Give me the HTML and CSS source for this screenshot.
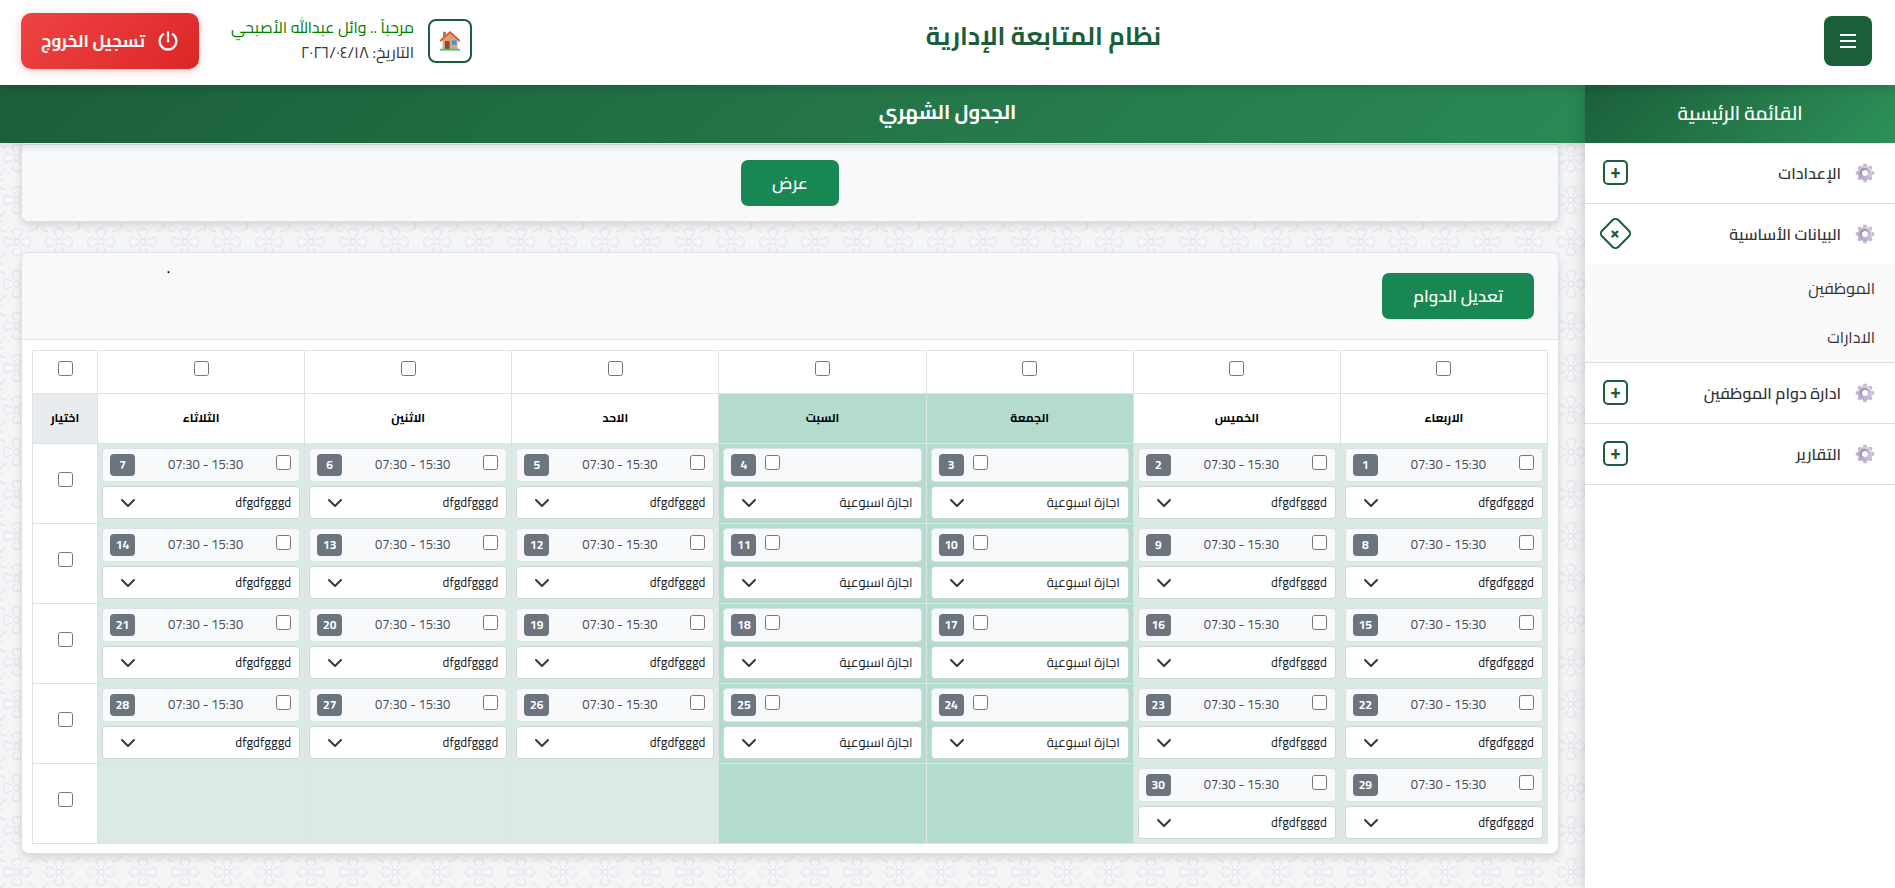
FILE: index.html
```
<!DOCTYPE html>
<html lang="ar" dir="rtl">
<head>
    <meta charset="UTF-8">
    <meta name="viewport" content="width=device-width, initial-scale=1.0">
    <title>نظام المتابعة الإدارية</title>
    <link rel="stylesheet" href="styles.css">
</head>
<body>
    <!-- shared icons -->
    <svg class="icon-defs" width="0" height="0" aria-hidden="true">
        <defs>
            <linearGradient id="gearFill" x1="0" y1="1" x2="1" y2="0">
                <stop offset="0" stop-color="#b3a1cc"/>
                <stop offset="1" stop-color="#dcd4e6"/>
            </linearGradient>
            <linearGradient id="gearRing" x1="0" y1="0" x2="1" y2="1">
                <stop offset="0" stop-color="#8f8299"/>
                <stop offset="1" stop-color="#d3c9e2"/>
            </linearGradient>
        </defs>
        <symbol id="gear" viewBox="0 0 20 20">
            <g stroke="url(#gearFill)" fill="#c5b8d9">
                <circle cx="10" cy="2.6" r="2.1" stroke="none"/>
                <circle cx="15.2" cy="4.8" r="2.1" stroke="none"/>
                <circle cx="17.4" cy="10" r="2.1" stroke="none"/>
                <circle cx="15.2" cy="15.2" r="2.1" stroke="none"/>
                <circle cx="10" cy="17.4" r="2.1" stroke="none"/>
                <circle cx="4.8" cy="15.2" r="2.1" stroke="none"/>
                <circle cx="2.6" cy="10" r="2.1" stroke="none"/>
                <circle cx="4.8" cy="4.8" r="2.1" stroke="none"/>
                <circle cx="10" cy="10" r="5.2" fill="none" stroke-width="4"/>
            </g>
            <circle cx="10" cy="10" r="4" fill="none" stroke="url(#gearRing)" stroke-width="2"/>
        </symbol>
    </svg>

    <header class="top-header">
        <div class="header-start">
            <button type="button" class="menu-toggle" aria-label="القائمة">
                <svg width="16" height="16" viewBox="0 0 16 16"><path d="M0 2h16M0 8h16M0 14h16" stroke="currentColor" stroke-width="2"/></svg>
            </button>
        </div>
        <h1>نظام المتابعة الإدارية</h1>
        <div class="header-end">
            <a href="#" class="home-link" aria-label="الرئيسية">
                <svg width="20" height="20" viewBox="0 0 20 20">
                    <path d="M3 .8h3v6H3z" fill="#a9825f"/>
                    <path d="M2.6 9 10 2l7.4 7v9.4H2.6z" fill="#dca46f"/>
                    <path d="M.8 9.6 10 1.2l9.2 8.4" fill="none" stroke="#e8563a" stroke-width="2" stroke-linejoin="round" stroke-linecap="round"/>
                    <path d="M5 10h4.6v8H5z" fill="#7d4b43"/>
                    <path d="M12 9.4h4.6v4.4H12z" fill="#2f9df4"/>
                    <path d="M0 17.8h20v1.8H0z" fill="#35c77c"/>
                </svg>
            </a>
            <div class="user-info">
                <div class="user-name">مرحباً .. وائل عبدالله الأصبحي</div>
                <div>التاريخ: ٢٠٢٦/٠٤/١٨</div>
            </div>
            <button type="button" class="logout-btn">
                <svg width="22" height="22" viewBox="0 0 22 22" fill="none" stroke="currentColor" stroke-width="2.2" stroke-linecap="round"><path d="M11 2.4v9M6.2 4.2a8.4 8.4 0 1 0 9.6 0"/></svg>
                تسجيل الخروج
            </button>
        </div>
    </header>

    <div class="layout">
        <div class="page-title"><h2>الجدول الشهري</h2></div>

        <nav class="sidebar">
            <h3>القائمة الرئيسية</h3>
            <ul class="menu">
                <li>
                    <a href="#" class="menu-item"><svg class="gear"><use href="#gear"/></svg><span>الإعدادات</span><b class="expand">+</b></a>
                </li>
                <li>
                    <a href="#" class="menu-item"><svg class="gear"><use href="#gear"/></svg><span>البيانات الأساسية</span><b class="expand open">+</b></a>
                    <div class="submenu">
                        <a href="#">الموظفين</a>
                        <a href="#">الادارات</a>
                    </div>
                </li>
                <li>
                    <a href="#" class="menu-item"><svg class="gear"><use href="#gear"/></svg><span>ادارة دوام الموظفين</span><b class="expand">+</b></a>
                </li>
                <li>
                    <a href="#" class="menu-item"><svg class="gear"><use href="#gear"/></svg><span>التقارير</span><b class="expand">+</b></a>
                </li>
            </ul>
        </nav>

        <main class="content">
            <section class="card filter-card">
                <div class="filter-footer">
                    <button type="button" class="btn">عرض</button>
                </div>
            </section>

            <section class="card">
                <div class="card-header">
                    <button type="button" class="btn">تعديل الدوام</button>
                    <span class="note">.</span>
                </div>
                <div class="card-body">
                    <table class="schedule">
                        <thead>
                            <tr class="check-row" id="checkRow"></tr>
                            <tr class="day-names" id="dayNames"></tr>
                        </thead>
                        <tbody id="scheduleBody"></tbody>
                    </table>
                </div>
            </section>
        </main>
    </div>

    <script>
        const days = ['الاربعاء', 'الخميس', 'الجمعة', 'السبت', 'الاحد', 'الاثنين', 'الثلاثاء'];
        const weekend = [2, 3];
        const daysInMonth = 30;

        const cls = i => weekend.includes(i) ? 'weekend' : 'workday';

        document.getElementById('checkRow').innerHTML =
            days.map(d => `<td><input type="checkbox" aria-label="${d}"></td>`).join('') +
            '<td class="pick"><input type="checkbox" aria-label="الكل"></td>';

        document.getElementById('dayNames').innerHTML =
            days.map((d, i) => `<th class="${cls(i)}">${d}</th>`).join('') +
            '<th class="pick">اختيار</th>';

        function dayCell(day, i) {
            if (day > daysInMonth) {
                return `<td class="${cls(i)}"></td>`;
            }
            const off = weekend.includes(i);
            return `
                <td class="${cls(i)}">
                    <div class="day-info">
                        <input type="checkbox" aria-label="${day}">
                        ${off ? '' : '<span class="hours" dir="ltr">07:30 - 15:30</span>'}
                        <span class="badge">${day}</span>
                    </div>
                    <select aria-label="${days[i]} ${day}">
                        <option>${off ? 'اجازة اسبوعية' : 'dfgdfgggd'}</option>
                    </select>
                </td>`;
        }

        let rows = '';
        for (let start = 1; start <= daysInMonth; start += 7) {
            rows += '<tr>' + days.map((d, i) => dayCell(start + i, i)).join('') +
                `<td class="pick"><input type="checkbox" aria-label="${start}"></td></tr>`;
        }
        document.getElementById('scheduleBody').innerHTML = rows;
    </script>
</body>
</html>
```
FILE: styles.css
```
* {
    margin: 0;
    padding: 0;
    box-sizing: border-box;
}

body {
    font-family: Cairo, "Open Sans", "DejaVu Sans", sans-serif;
    font-size: 16px;
    color: #333;
    background: #f4f5f7;
    min-height: 100vh;
    display: flex;
    flex-direction: column;
}

a {
    color: inherit;
    text-decoration: none;
}

button {
    font-family: inherit;
    border: none;
    cursor: pointer;
}

.icon-defs {
    position: absolute;
}

/* header */
.top-header {
    display: grid;
    grid-template-columns: 11fr auto 14fr;
    align-items: center;
    height: 85px;
    padding: 0 23px 4px 21px;
    background: #fff;
    box-shadow: 0 2px 10px rgba(0, 0, 0, 0.15);
    position: relative;
    z-index: 3;
}

.top-header h1 {
    font-size: 25px;
    font-weight: 700;
    line-height: 36px;
    padding-bottom: 10px;
    color: #1b5e3a;
}

.menu-toggle {
    display: flex;
    align-items: center;
    justify-content: center;
    width: 48px;
    height: 50px;
    border-radius: 8px;
    background: #1b5e3a;
    color: #fff;
}

.header-end {
    display: flex;
    align-items: center;
    justify-content: flex-end;
}

.home-link {
    display: flex;
    align-items: center;
    justify-content: center;
    width: 44px;
    height: 44px;
    border: 2px solid #1b5e3a;
    border-radius: 8px;
}

.user-info {
    margin: 0 14px 0 32px;
    padding-bottom: 2px;
    font-size: 16px;
    line-height: 25px;
}

.user-name {
    color: #008000;
}

.logout-btn {
    display: flex;
    align-items: center;
    gap: 12px;
    height: 56px;
    padding: 0 20px;
    border-radius: 10px;
    background: linear-gradient(135deg, #ef4444, #dc2626);
    box-shadow: 0 2px 8px rgba(239, 68, 68, 0.3);
    color: #fff;
    font-size: 17px;
    font-weight: 700;
}

/* the page title runs behind the sidebar */
.layout {
    flex: 1;
    display: grid;
    grid-template-columns: 310px 1fr;
    grid-template-rows: 58px 1fr;
}

.page-title {
    grid-area: 1 / 1 / 2 / 3;
    background: linear-gradient(135deg, #1b5e3a, #2d9159);
    box-shadow: 0 2px 10px rgba(0, 0, 0, 0.15);
    color: #fff;
    text-align: center;
    z-index: 1;
}

.page-title h2 {
    font-size: 20px;
    font-weight: 700;
    line-height: 54px;
}

/* sidebar */
.sidebar {
    grid-area: 1 / 1 / 3 / 2;
    background: #fff;
    box-shadow: 0 0 15px rgba(0, 0, 0, 0.2);
    z-index: 2;
}

.sidebar h3 {
    height: 58px;
    background: linear-gradient(135deg, #1b5e3a, #2d9159);
    color: #fff;
    font-size: 19px;
    font-weight: 600;
    line-height: 56px;
    text-align: center;
}

.menu {
    list-style: none;
}

.menu li {
    border-bottom: 1px solid #ddd;
}

.menu-item {
    display: flex;
    align-items: center;
    height: 60px;
    padding: 0 20px 0 18px;
}

.menu-item span {
    flex: 1;
    margin-right: 14px;
    font-weight: 600;
}

.gear {
    width: 20px;
    height: 20px;
}

.expand {
    width: 25px;
    height: 25px;
    margin-bottom: 1px;
    border: 2px solid #1b5e3a;
    border-radius: 5px;
    color: #1b5e3a;
    font-size: 19px;
    line-height: 19px;
    text-align: center;
}

.expand.open {
    transform: rotate(45deg);
}

.submenu {
    background: #fafafa;
}

.submenu a {
    display: block;
    padding: 0 20px;
    line-height: 49px;
}

/* content */
.content {
    padding: 0 26px 34px 21px;
    background: #f4f5f7 url("data:image/svg+xml,%3Csvg xmlns='http://www.w3.org/2000/svg' width='42' height='42' fill='none' stroke='%23e6e7ea' stroke-width='1.3'%3E%3Ccircle cx='17' cy='15' r='3'/%3E%3Cpath d='M15 11L12 4Q17 -1 22 4L19 11'/%3E%3Cpath d='M15 11L12 4Q17 -1 22 4L19 11' transform='rotate(90 17 15)'/%3E%3Cpath d='M15 11L12 4Q17 -1 22 4L19 11' transform='rotate(180 17 15)'/%3E%3Cpath d='M15 11L12 4Q17 -1 22 4L19 11' transform='rotate(270 17 15)'/%3E%3Cpath d='M28 26Q38 32 38 42M38 0Q37 2 28 5M6 26Q-1 30 -4 42M0 2Q2 4 6 5M31 36Q38 30 45 36M0 36L3 38'/%3E%3C/svg%3E");
}

.card {
    background: #fff;
    border: 1px solid #dee2e6;
    border-radius: 8px;
    box-shadow: 0 4px 8px rgba(0, 0, 0, 0.12);
    overflow: hidden;
}

.filter-card {
    margin-bottom: 30px;
    border-top: none;
    border-radius: 0 0 8px 8px;
}

.filter-footer {
    margin-top: 1px;
    padding: 15px;
    border-top: 1px solid #dee2e6;
    background: #f8f9fb;
    text-align: center;
}

.btn {
    height: 46px;
    padding: 0 31px;
    border-radius: 7px;
    background: #198754;
    color: #fff;
    font-size: 17px;
    font-weight: 600;
    vertical-align: top;
}

.card-header {
    display: flex;
    justify-content: space-between;
    padding: 20px 24px 20px 145px;
    border-bottom: 1px solid #dee2e6;
    background: #f8f9fb;
}

.note {
    margin-top: -4px;
    font-size: 12px;
    font-weight: 700;
    line-height: 0;
    color: #000;
}

.card-body {
    padding: 10px 10px 9px;
}

/* schedule */
.schedule {
    width: 100%;
    table-layout: fixed;
    border-collapse: collapse;
    font-size: 12px;
}

.schedule th,
.schedule td {
    border: 1px solid #dee2e6;
    text-align: center;
    vertical-align: middle;
}

.schedule .pick {
    width: 65px;
}

.schedule input {
    width: 15px;
    height: 15px;
    vertical-align: middle;
}

.check-row td {
    height: 43px;
    padding-bottom: 10px;
}

.day-names th {
    height: 50px;
    padding-bottom: 2px;
    color: #000;
    font-weight: 700;
}

.day-names .workday {
    background: #fff;
}

.day-names .pick {
    background: #e9ecef;
}

.schedule tbody td {
    height: 80px;
    padding: 4px;
}

.schedule tbody .pick {
    padding-bottom: 16px;
}

.workday {
    background: #dceae5;
}

.weekend {
    background: #b3dccf;
}

.day-info {
    display: flex;
    align-items: center;
    justify-content: space-between;
    height: 34px;
    margin-bottom: 4px;
    padding: 0 8px 0 7px;
    border: 1px solid #dee2e6;
    border-radius: 4px;
    background: #f8f9fa;
}

.weekend .day-info {
    justify-content: flex-end;
    gap: 9px;
}

.day-info input {
    margin-bottom: 6px;
}

.badge {
    width: 25px;
    height: 22px;
    border-radius: 4px;
    background: #6c757d;
    color: #fff;
    font-size: 12px;
    font-weight: 700;
    line-height: 22px;
}

.hours {
    color: #495057;
    font-size: 13px;
    line-height: 20px;
    padding-bottom: 2px;
}

.schedule select {
    display: block;
    width: 100%;
    height: 33px;
    padding: 0 8px 2px 36px;
    appearance: none;
    border: 1px solid #ced4da;
    border-radius: 4px;
    background: #fff url("data:image/svg+xml,%3Csvg xmlns='http://www.w3.org/2000/svg' width='16' height='12' viewBox='0 0 16 12' fill='none' stroke='%23343a40' stroke-width='2' stroke-linecap='round' stroke-linejoin='round'%3E%3Cpath d='M2 3l6 6 6-6'/%3E%3C/svg%3E") no-repeat left 17px center;
    color: #212529;
    font-family: inherit;
    font-size: 13px;
}
```
